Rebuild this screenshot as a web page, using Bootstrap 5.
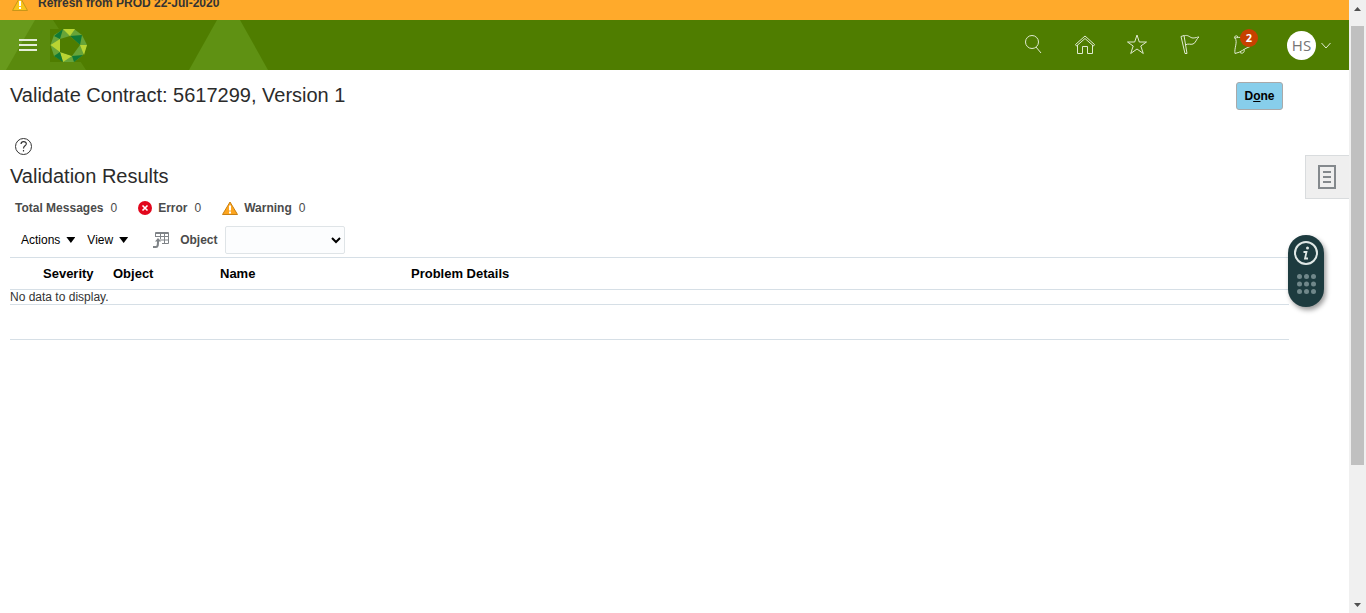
<!DOCTYPE html>
<html lang="en">
<head>
<meta charset="utf-8">
<meta name="viewport" content="width=device-width, initial-scale=1">
<title>Validate Contract</title>
<link href="https://cdn.jsdelivr.net/npm/bootstrap@5.3.0/dist/css/bootstrap.min.css" rel="stylesheet">
<style>
body{font-family:"Liberation Sans",Arial,sans-serif;font-size:12px;line-height:16px;color:#333;background:#fff}
svg{display:block;flex:none}
.notice{height:20px;background:#ffaa2b;padding:0 12px 9px;font-weight:700;color:#333}
.notice span{padding-left:10px}
.topbar{height:50px;background:#4f7d00}
.topbar .shapes{top:0;left:0}
.topbar button,.plain{border:0;background:none;padding:0;color:inherit}
.topbar .menu-btn{margin-left:19px}
.brand-tile{margin-left:13px}
.tools{gap:28px;padding-right:17px;color:#dfead0}
.tools svg{stroke:currentColor;fill:none;stroke-width:1}
.count-dot{left:9px;top:-4px;width:18px;height:18px;border-radius:50%;background:#c74100;color:#fff;font:700 11px/18px "Open Sans",sans-serif}
.avatar{width:29px;height:29px;border-radius:50%;background:#fff;color:#757575;font:15px/29px "Open Sans",sans-serif}
.content{padding:12px 60px 0 10px}
.page-title{font-size:20px;line-height:26px;font-weight:400;margin:0;color:#2b2b2b}
.titlebar{padding-right:6px;margin-bottom:27px}
.done-btn{height:28px;width:47px;border:1px solid #a9a9a9;border-radius:3px;background:#87ceeb;color:#000;font-size:12px;font-weight:700;line-height:16px;padding:0}
.done-btn:hover{background:#78c3e3;color:#000}
.help-btn{margin:0 0 7px 4px}
.summary{height:28px;padding-left:5px;margin-top:5px;color:#4b4b4b}
.summary b{margin-right:7px}
.summary svg{margin:0 6px 0 21px}
.actionbar{height:28px;margin:4px 0 3px;padding-left:11px;color:#000}
.menu-label{gap:6px;margin-right:12px}
.caret-down{width:9px;height:6px;background:#000;clip-path:polygon(0 0,100% 0,50% 100%)}
.detach-btn{margin-left:13px}
.object-select{width:120px;height:28px;border:1px solid #dfe4e7;border-radius:2px;background:#fcfdfe;padding:0 2px;color:#000}
.object-label{color:#4b4b4b;font-weight:700;margin:0 7px 0 11px}
.results{--edge:#d6dfe6;width:100%;border-top:1px solid var(--edge);border-collapse:separate;border-spacing:0;table-layout:fixed}
.results th{height:32px;border-bottom:1px solid var(--edge);font-size:13px;color:#000;padding:0}
.results td{height:15px;line-height:14px;border-bottom:1px solid var(--edge);padding:0}
.results tfoot td{height:35px}
.c-mark{width:33px}.c-severity{width:70px}.c-object{width:107px}.c-name{width:191px}
.side-tab{right:0;top:155px;width:44px;height:44px;background:#efefef!important;border:1px solid #d9dcde!important;border-right:0!important}
.guide-pill{right:25px;top:235px;width:36px;height:72px;border-radius:18px;background:#1d3b3f!important;box-shadow:2px 3px 5px rgba(0,0,0,.4)}
.scroll-rail{width:17px;background:#f0f0f0;flex:none;padding:0 2px}
.scroll-rail .end{height:26px;padding:7px 3px}
.scroll-rail .thumb{height:71.6vh;background:#c0c0c0}
.scroll-rail .end-down{margin-top:auto;height:16px;padding:6px 3px}
</style>
</head>
<body>
<div class="d-flex vh-100 overflow-hidden">
<div class="flex-grow-1 position-relative">
  <div class="notice d-flex align-items-end overflow-hidden">
    <svg width="16" height="15" viewBox="0 0 16 15"><path d="M8 1 15.500 14.500H.5z" fill="#f8c51c" stroke="#c89619"/><path d="M8 5v5M8 11v2" stroke="#fff" stroke-width="2"/></svg>
    <span class="text-nowrap">Refresh from PROD 22-Jul-2020</span>
  </div>
  <header class="topbar d-flex align-items-center position-relative">
    <svg class="shapes position-absolute" width="280" height="50"><path d="M0 0H53L86 50H0z" fill="#5a8a0d"/><path d="M0 0H35L6 50H0z" fill="#689a1c"/><path d="M217 0H240L268 50H189z" fill="#5f9113"/></svg>
    <button type="button" class="menu-btn position-relative" aria-label="Menu"><svg width="18" height="12"><path d="M0 1h18M0 6h18M0 11h18" stroke="#e4edd8" stroke-width="2"/></svg></button>
    <a href="#" class="position-relative brand-tile" aria-label="Home">
      <svg width="38" height="36" viewBox="0 0 38 36"><path d="M0 2h37v33H0z" fill="#4f7d00"/>
      <path d="M14 2H24L32 8 37 18 33 28 24 35H14L4 29 .5 18 4 8z" fill="#67a438"/>
      <path d="M13 2H25L20 9zM.5 18 10 12V25zM34 28 37 18H30zM10 25 22 29 13 35z" fill="#b9d432"/>
      <path d="M4 9 13 2 10 12zM20 9 32 8 30 18zM4 29 10 25 13 35zM22 29 33 28 24 35z" fill="#117a35"/>
      <path d="M10 12 20 9 30 18 22 29 10 25z" fill="#4f7d00"/></svg>
    </a>
    <nav class="tools d-flex align-items-center ms-auto" aria-label="Global">
      <button type="button" aria-label="Search"><svg width="24" height="24" viewBox="3 1 24 24"><circle cx="12" cy="10" r="6.500"/><path d="M16 15l5 6"/></svg></button>
      <button type="button" aria-label="Home page"><svg width="24" height="24" viewBox="2 1 24 24"><path d="M2.500 12.500 12 4l9.500 8.500-1 1.500L12 6.500 3.500 14zM4.500 13v8.500h5v-7h5v7h5V13"/></svg></button>
      <button type="button" aria-label="Favorites"><svg width="24" height="24" viewBox="2 1 24 24"><path d="m12 3 2.300 7H21.500L15.800 14l2.500 7.500L12 17l-6.300 4.500L8.200 14 2.500 10H9.700z"/></svg></button>
      <button type="button" aria-label="Watchlist"><svg width="24" height="24" viewBox="1 1 24 24"><path d="M3 4.500 6 3.500 9 21.500H7zM6 4c4-2 6 2 9 2s4-1 6-1c-3 2-3 6-6 7s-4-1-8 1"/></svg></button>
      <button type="button" class="position-relative" aria-label="Notifications, 2 new"><svg width="24" height="24" viewBox="0 1 24 24"><path d="M4 6.500c-2-2 2-4 3-1.500M4 6c3 4-1 10 0 15.500 6-1 9-5 15-7M4 6c5-1 8-1 12 2M9 20.500c3 2 5-1 4-3"/></svg><span class="count-dot position-absolute text-center">2</span></button>
      <button type="button" class="d-flex align-items-center ms-1 gap-1" aria-label="Settings and actions for HS"><span class="avatar">HS</span><svg width="12" height="12"><path d="m1.500 4 4.500 5 4.500-5"/></svg></button>
    </nav>
  </header>
  <main class="content">
    <div class="titlebar d-flex justify-content-between align-items-start">
      <h1 class="page-title">Validate Contract: 5617299, Version 1</h1>
      <button type="button" class="btn done-btn">D<u>o</u>ne</button>
    </div>
    <button type="button" class="plain help-btn d-block" aria-label="Help"><svg width="19" height="19" fill="none" stroke="#333"><circle cx="9.500" cy="9.500" r="8"/><path d="M7 7c.2-3.500 5.500-3 5.300 0C12 9 9.500 8.800 9.500 11.500M9.500 13v1.500" stroke-width="1.200"/></svg></button>
    <h2 class="page-title">Validation Results</h2>
    <div class="summary d-flex align-items-center">
      <b>Total Messages</b><span>0</span>
      <svg width="14" height="14"><circle cx="7" cy="7" r="7" fill="#e2061c"/><path d="m4.500 4.500 5 5m0-5-5 5" stroke="#fff" stroke-width="1.600"/></svg>
      <b>Error</b><span>0</span>
      <svg width="16" height="15" viewBox="0 0 16 15"><path d="M8 1 15.500 13.500H.5z" fill="#fda51e" stroke="#c98012" stroke-linejoin="round"/><path d="M8 4.500v5M8 10.500v2" stroke="#fff" stroke-width="2"/></svg>
      <b>Warning</b><span>0</span>
    </div>
    <div class="actionbar d-flex align-items-center">
      <button type="button" class="plain menu-label d-flex align-items-center">Actions <span class="caret-down"></span></button>
      <button type="button" class="plain menu-label d-flex align-items-center">View <span class="caret-down"></span></button>
      <button type="button" class="plain detach-btn" aria-label="Detach"><svg width="16" height="16" fill="none" stroke="#7f8387"><path d="M2.500 5V.5h13v11H9M2 1.500h14M2.500 4.500h13M6.500 8h9M7.500 1v6M11.500 1v11"/><path d="M0 15h3c2 0 2-2 2-6" stroke-width="2"/><path d="M2 9.500 5 6l3 3.500z" fill="#7f8387" stroke="none"/></svg></button>
      <label class="object-label" for="objectFilter">Object</label>
      <select id="objectFilter" class="object-select"><option></option></select>
    </div>
    <table class="results">
      <colgroup><col class="c-mark"><col class="c-severity"><col class="c-object"><col class="c-name"><col></colgroup>
      <thead><tr><th></th><th scope="col">Severity</th><th scope="col">Object</th><th scope="col">Name</th><th scope="col">Problem Details</th></tr></thead>
      <tbody><tr><td colspan="5">No data to display.</td></tr></tbody>
      <tfoot><tr><td colspan="5"></td></tr></tfoot>
    </table>
  </main>
  <button type="button" class="plain side-tab position-absolute d-flex align-items-center justify-content-center" aria-label="Open panel"><svg width="19" height="24" fill="none" stroke="#84898d" stroke-width="2"><path d="M1 1h16v22H1zM5 7h8M5 12h8M5 17h8"/></svg></button>
  <button type="button" class="plain guide-pill position-absolute" aria-label="Guided help"><svg width="36" height="72"><circle cx="18" cy="18" r="11" fill="none" stroke="#dfe7e5" stroke-width="2"/><circle cx="19.500" cy="13" r="1.500" fill="#dfe7e5"/><path d="M15.500 17H18.500l-1.500 6.500h3" fill="none" stroke="#dfe7e5" stroke-width="1.800"/><g fill="#70878a"><circle cx="11.500" cy="41.500" r="2.500"/><circle cx="18.500" cy="41.500" r="2.500"/><circle cx="25.500" cy="41.500" r="2.500"/><circle cx="11.500" cy="49" r="2.500"/><circle cx="18.500" cy="49" r="2.500"/><circle cx="25.500" cy="49" r="2.500"/><circle cx="11.500" cy="56.500" r="2.500"/><circle cx="18.500" cy="56.500" r="2.500"/><circle cx="25.500" cy="56.500" r="2.500"/></g></svg></button>
</div>
<div class="scroll-rail d-flex flex-column" aria-hidden="true">
  <div class="end"><svg width="7" height="4"><path d="M0 4 3.500 0 7 4z" fill="#505050"/></svg></div>
  <div class="thumb"></div>
  <div class="end-down"><svg width="7" height="4"><path d="M0 0h7L3.500 4z" fill="#505050"/></svg></div>
</div>
</div>
<script src="https://cdn.jsdelivr.net/npm/bootstrap@5.3.0/dist/js/bootstrap.bundle.min.js"></script>
</body>
</html>
